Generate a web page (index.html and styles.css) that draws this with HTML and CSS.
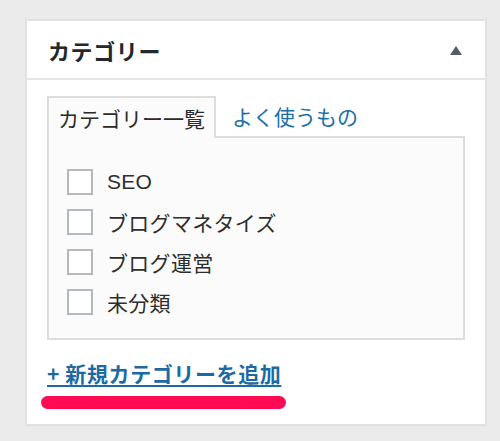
FILE: index.html
```html
<!DOCTYPE html>
<html lang="ja">
<head>
<meta charset="utf-8">
<link rel="stylesheet" href="styles.css">
</head>
<body>
<div class="box">
  <div class="box-head">
    <h2 class="title">カテゴリー</h2>
    <span class="toggle"></span>
  </div>
  <div class="box-body">
    <div class="tabs">
      <div class="tab active">カテゴリー一覧</div>
      <div class="tab link">よく使うもの</div>
    </div>
    <div class="panel">
      <label class="row"><span class="check"></span><span class="label latin">SEO</span></label>
      <label class="row"><span class="check"></span><span class="label">ブログマネタイズ</span></label>
      <label class="row"><span class="check"></span><span class="label">ブログ運営</span></label>
      <label class="row"><span class="check"></span><span class="label">未分類</span></label>
    </div>
    <a class="add" href="#">+ 新規カテゴリーを追加</a>
    <div class="marker"></div>
  </div>
</div>
</body>
</html>
```
FILE: styles.css
```css
html, body {
  margin: 0;
  padding: 0;
}
body {
  background: #ebebeb;
  font-family: "Liberation Sans", "Noto Sans CJK JP", sans-serif;
  color: #23282d;
  width: 500px;
  height: 441px;
  overflow: hidden;
}
.box {
  box-sizing: border-box;
  margin: 19px 0 0 25px;
  width: 462px;
  height: 407px;
  background: #fff;
  border: 2px solid #e1e1e1;
}
.box-head {
  box-sizing: border-box;
  height: 59px;
  border-bottom: 2px solid #e5e5e5;
  display: flex;
  align-items: center;
  justify-content: space-between;
  padding: 0 23px 0 21px;
}
.title {
  margin: 0;
  font-size: 22px;
  font-weight: bold;
  color: #23282d;
  font-family: "Noto Sans CJK JP", sans-serif;
  letter-spacing: 0.6px;
}
.toggle {
  width: 0;
  height: 0;
  border-left: 6px solid transparent;
  border-right: 6px solid transparent;
  border-bottom: 9px solid #555c61;
  margin-top: 2px;
}
.box-body {
  padding: 16px 0 0 20px;
  display: flex;
  flex-direction: column;
  align-items: flex-start;
}
.tabs {
  display: flex;
  align-items: flex-end;
  height: 42px;
  position: relative;
  z-index: 1;
}
.tab {
  font-family: "Noto Sans CJK JP", sans-serif;
  font-size: 21px;
  line-height: 40px;
}
.tab.active {
  box-sizing: border-box;
  width: 169px;
  height: 42px;
  padding-left: 9px;
  background: #fbfbfb;
  border: 2px solid #dddddd;
  border-bottom: none;
  color: #2b2b2b;
}
.tab.link {
  color: #1d6fa8;
  margin-left: 16px;
  height: 42px;
}
.panel {
  box-sizing: border-box;
  width: 418px;
  height: 204px;
  margin-top: -2px;
  background: #fbfbfb;
  border: 2px solid #dddddd;
  padding: 31px 0 0 18px;
  display: flex;
  flex-direction: column;
  gap: 14px;
}
.row {
  display: flex;
  align-items: center;
  height: 26px;
}
.check {
  box-sizing: border-box;
  width: 26px;
  height: 26px;
  background: #fff;
  border: 2px solid #b4b9be;
}
.label {
  margin-left: 14px;
  font-size: 21px;
  letter-spacing: 0.3px;
  color: #2e2e2e;
  font-family: "Noto Sans CJK JP", sans-serif;
}
.label.latin {
  font-family: "Liberation Sans", sans-serif;
}
.add {
  margin-top: 18px;
  font-family: "Noto Sans CJK JP", sans-serif;
  font-size: 21px;
  font-weight: bold;
  letter-spacing: 0.6px;
  color: #1d6aa3;
  text-decoration: underline;
  text-decoration-thickness: 2px;
  text-underline-offset: 3px;
  line-height: 30px;
}
.marker {
  margin: 8px 0 0 -6px;
  width: 245px;
  height: 13px;
  border-radius: 7px;
  background: #ff0a54;
}
```
